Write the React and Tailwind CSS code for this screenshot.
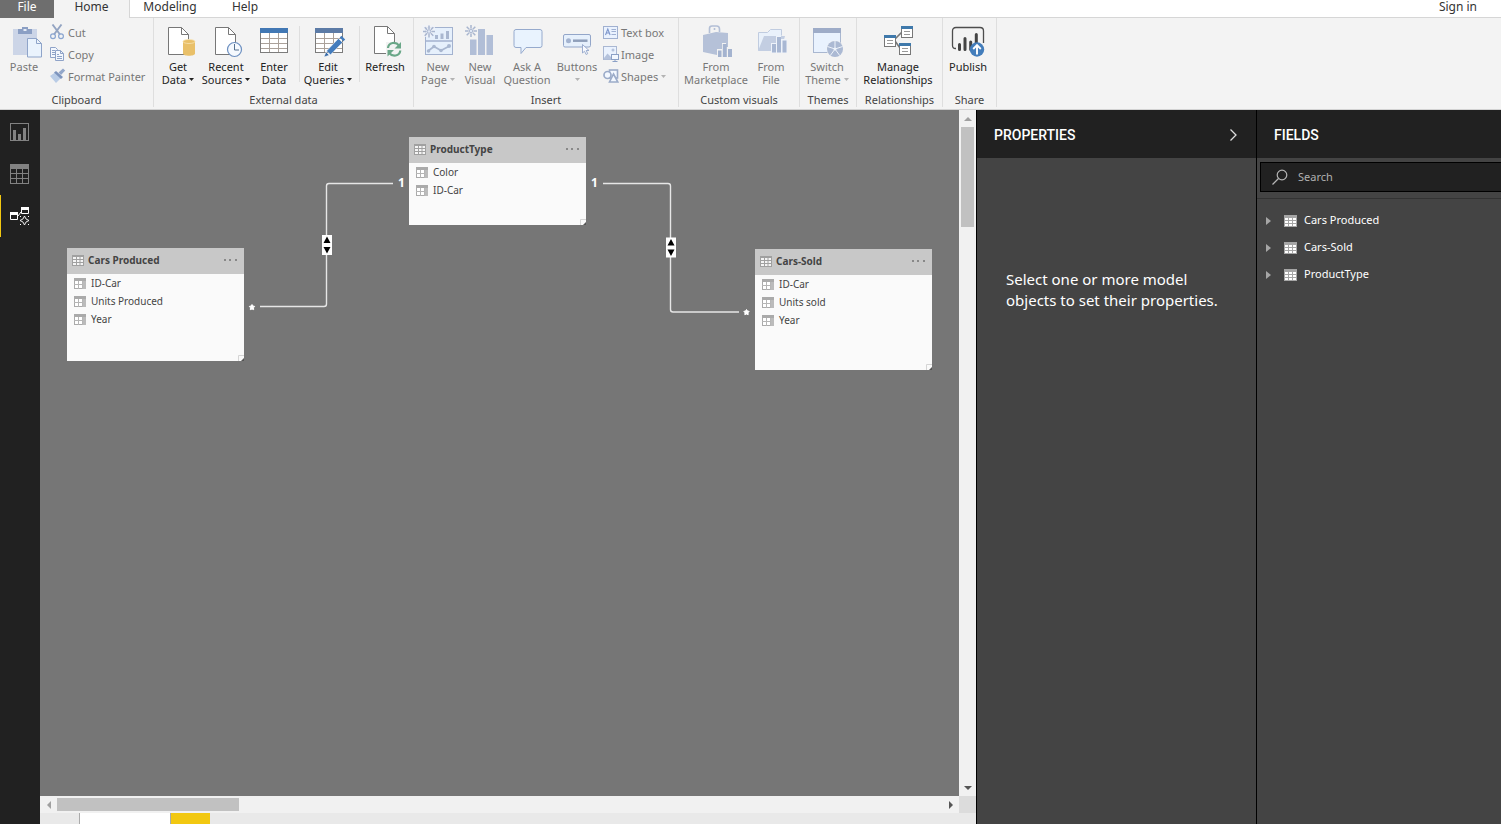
import React from "react";

/* ---------- shared icon pieces ---------- */

function BigIcon({ children }) {
  return (
    <svg className="h-8 w-9 shrink-0 overflow-visible" viewBox="0 0 36 32" fill="none" aria-hidden="true">
      {children}
    </svg>
  );
}

function SmallIcon({ children }) {
  return (
    <svg className="size-4 shrink-0" viewBox="0 0 16 16" fill="none" aria-hidden="true">
      {children}
    </svg>
  );
}

function Burst({ x, y }) {
  return (
    <g transform={`translate(${x} ${y})`} stroke="#a9b6cf" strokeWidth="1.5">
      <path d="M0-6V-2.500M0 2.500V6M-6 0h3.500M2.500 0H6M-4.300-4.300l2.500 2.500M1.800 1.800l2.500 2.500M4.300-4.300L1.800-1.800M-1.800 1.800l-2.500 2.500" />
      <circle r="1.800" fill="#dfe7f5" strokeWidth="1" />
    </g>
  );
}

function Page({ x = 8, y = 1 }) {
  return (
    <g transform={`translate(${x} ${y})`} stroke="#777" strokeWidth="1">
      <path d="M.5.5h13l7 7v20H.5z" fill="#fff" />
      <path d="M13.500.5v7h7" />
    </g>
  );
}

function Grid({ x, y, header }) {
  return (
    <g transform={`translate(${x} ${y})`}>
      <rect x=".5" y=".5" width="27" height="24" fill="#fff" stroke="#7c7c7c" />
      <path d="M9.500 5v19M18.500 5v19M1 10.500h26M1 15.500h26M1 20.500h26" stroke="#aaa19a" />
      <rect width="28" height="5" fill={header} />
    </g>
  );
}

const PasteIcon = () => (
  <BigIcon>
    <path d="M7 3h24v26H7z" fill="#ccd5e7" />
    <path d="M12 8V3h4V1h6v2h4v5z" fill="#8b9fc4" />
    <path d="M17.500 3h3v2h-3z" fill="#e6ecf6" />
    <path d="M21.500 12.500h9l5 5v13.500h-14z" fill="#eaf3fd" stroke="#8fa4c9" />
    <path d="M30.500 12.500v5h5" stroke="#8fa4c9" />
  </BigIcon>
);

const GetDataIcon = () => (
  <BigIcon>
    <Page />
    <path d="M23 15.500v12c0 3 12 3 12 0v-12z" fill="#e9c069" />
    <ellipse cx="29" cy="15.500" rx="6" ry="2" fill="#e9c069" stroke="#f7e3b4" strokeWidth=".8" />
  </BigIcon>
);

const RecentIcon = () => (
  <BigIcon>
    <Page x={7} />
    <circle cx="26.500" cy="23.500" r="7" fill="#f5f9fe" stroke="#6c8fc0" strokeWidth="1.200" />
    <path d="M26.500 18v6h4.500" stroke="#54708f" />
  </BigIcon>
);

const EnterDataIcon = () => (
  <BigIcon>
    <Grid x={4} y={2} header="#4278b4" />
  </BigIcon>
);

const EditQueriesIcon = () => (
  <BigIcon>
    <Grid x={5} y={2} header="#5c7ba6" />
    <path d="M14 31l2-5 3.200 3.200z" fill="#3568a6" stroke="#fff" strokeWidth=".5" />
    <path d="M16.500 25L28.500 12.500l4 4L20.500 28.700z" fill="#437cbd" stroke="#fff" strokeWidth=".5" />
    <path d="M29.700 11.600l1.800-1.800 3.700 3.700-1.800 1.800z" fill="#437cbd" />
  </BigIcon>
);

const RefreshIcon = () => (
  <BigIcon>
    <Page x={7} y={0} />
    <rect x="19" y="16" width="16" height="15" fill="#f3f3f3" />
    <path d="M21 22c.5-6 8-6.500 11-2.500M33.300 24.500c-.6 6-8 6.500-11 2.500" stroke="#6aa788" strokeWidth="2.200" />
    <path d="M34 16v6.500h-6.500zM20.500 30.500V24H27z" fill="#6aa788" />
  </BigIcon>
);

const NewPageIcon = () => (
  <BigIcon>
    <rect x="5.500" y="1.500" width="27" height="27" fill="#e6f0fc" stroke="#a3b2cf" />
    <path d="M5.500 15h27" stroke="#a3b2cf" strokeWidth="1.500" />
    <path d="M15 9h3v4h-3zM20.500 7.500h3V13h-3zM26 5h3v8h-3z" fill="#a9b7d0" />
    <path d="M8 25l6-4.500 7 4L29.500 20" stroke="#a9b7d0" strokeWidth="1.800" />
    <g fill="#a9b7d0">
      <circle cx="8.500" cy="25" r="1.800" />
      <circle cx="14" cy="20.500" r="1.800" />
      <circle cx="21" cy="24.500" r="1.800" />
      <circle cx="29" cy="20" r="2" />
    </g>
    <path d="M2-1h13v6l-4 6H2z" fill="#f0f3f8" opacity=".8" />
    <Burst x={9} y={5.500} />
  </BigIcon>
);

const NewVisualIcon = () => (
  <BigIcon>
    <path d="M8 13.500h6.500V29H8zM16 3h7v26h-7zM24.500 9H31v20h-6.500z" fill="#b1bed7" />
    <Burst x={9} y={5} />
  </BigIcon>
);

const AskIcon = () => (
  <BigIcon>
    <path d="M7 3.500h24q2 0 2 2v14q0 2-2 2H17l-5 6v-6H7q-2 0-2-2v-14q0-2 2-2z" fill="#e9f3fe" stroke="#96aacd" />
  </BigIcon>
);

const ButtonsIcon = () => (
  <BigIcon>
    <rect x="4.500" y="8.500" width="27" height="12.500" rx="1.500" fill="#e6f0fc" stroke="#93a6c9" />
    <circle cx="9.500" cy="14.700" r="2.500" fill="#a3b3d0" />
    <path d="M14 14.700h14.500" stroke="#8f9fba" strokeWidth="2.500" />
    <path d="M23.500 18.500v8.500l2-1.800 1.600 3.300 1.600-.8-1.500-3.200h2.800z" fill="#f8faff" stroke="#93a6c9" strokeWidth=".9" />
  </BigIcon>
);

const MarketplaceIcon = () => (
  <BigIcon>
    <path d="M11.500 7V2.500Q11.500 0 14 0h4.500q3 0 3 3v3M16.500 4V2" stroke="#b3bfd6" strokeWidth="1.600" />
    <path d="M5 9l13-3 12 1v14h-2v-4h-4v6h-5v6l-14-3z" fill="#b5c1d8" />
    <path d="M20 24.500h3.500V31H20zM24.800 18h4v13h-4zM30 23h4v8h-4z" fill="#a4b3cf" />
  </BigIcon>
);

const FromFileIcon = () => (
  <BigIcon>
    <path d="M5.500 24.500v-18h9l3-3h11v6" fill="#e9f1fb" stroke="#c0cce0" />
    <path d="M5 25l6-15h21l-4 15z" fill="#c3cee2" />
    <path d="M18 17h5v-7h5v3h6v14H18z" fill="#eef3fa" />
    <path d="M19 18h4v8.500h-4zM24 11h4v15.500h-4zM29.500 14.500h4v12h-4z" fill="#a9b8d3" />
  </BigIcon>
);

const ThemeIcon = () => (
  <BigIcon>
    <rect x="4.500" y="2.500" width="27" height="24" fill="#e9f2fe" stroke="#a9b7d0" />
    <path d="M4 2h28v5H4z" fill="#9eacc8" />
    <circle cx="26" cy="23" r="8.500" fill="#f3f3f3" />
    <circle cx="26" cy="23" r="8" fill="#abb9d3" />
    <path d="M26 23v-8M26 23l7.600-2.500M26 23l4.700 6.500M26 23l-4.700 6.500M26 23l-7.600-2.500" stroke="#eef3fa" />
    <circle cx="26" cy="23" r="1.500" fill="#eef3fa" />
  </BigIcon>
);

function MiniBox({ x, y }) {
  return (
    <g transform={`translate(${x} ${y})`}>
      <rect x=".5" y=".5" width="11" height="11" fill="#fff" stroke="#777" />
      <path d="M0 0h12v3H0z" fill="#3f79ab" />
      <path d="M3 5.500h6M3 8.500h6" stroke="#999" />
    </g>
  );
}

const RelationsIcon = () => (
  <BigIcon>
    <path d="M15 13l7-7M15 15l5 7" stroke="#777" strokeWidth="1.600" />
    <MiniBox x={4} y={9} />
    <MiniBox x={21} y={0} />
    <MiniBox x={19} y={17} />
  </BigIcon>
);

const PublishIcon = () => (
  <BigIcon>
    <path d="M6 22.500H5.500q-3 0-3-3V5q0-3.500 3.500-3.500h24q3.500 0 3.500 3.500v12" stroke="#4d4d4d" strokeWidth="1.300" />
    <path d="M9.500 18.500v5M15 12.500v11M20.700 16v7.500M26.300 8.500V18" stroke="#444" strokeWidth="3" strokeLinecap="round" />
    <circle cx="27" cy="23.500" r="7.200" fill="#437dbb" />
    <path d="M27 28.500v-9M23.200 23l3.800-3.800 3.800 3.800" stroke="#fff" strokeWidth="1.900" />
  </BigIcon>
);

const CutIcon = () => (
  <SmallIcon>
    <path d="M2.500.5l7.500 10M11.500.5L4 10.500" stroke="#93a4c2" strokeWidth="1.900" />
    <circle cx="3" cy="12.200" r="2.400" stroke="#8aa5d0" strokeWidth="1.200" />
    <circle cx="11" cy="12.200" r="2.400" stroke="#8aa5d0" strokeWidth="1.200" />
  </SmallIcon>
);

const CopyIcon = () => (
  <SmallIcon>
    <path d="M.5 1.500h5l2 2v8h-7z" fill="#f3f7fd" stroke="#8fa3c8" />
    <path d="M2 4.500h3M2 6.500h3M2 8.500h3" stroke="#8fa3c8" />
    <path d="M5.500 4.500h5l3 3v7h-8z" fill="#f3f7fd" stroke="#8fa3c8" />
    <path d="M10.500 4.500v3h3M7 8.500h2M7 10.500h5M7 12.500h5" stroke="#8fa3c8" />
  </SmallIcon>
);

const PainterIcon = () => (
  <SmallIcon>
    <path d="M0 8l5-3.500 6 5.500-5 5z" fill="#b9cce6" />
    <path d="M4 4.500l2-1.500 7 6-2 2z" fill="#7d94bd" />
    <path d="M8.500 4.500L13 .5 15.200 2.500 11 7z" fill="#93a7ca" />
  </SmallIcon>
);

const TextBoxIcon = () => (
  <SmallIcon>
    <rect x=".5" y="2.500" width="14" height="12" fill="#eaf2fe" stroke="#a0b0d0" />
    <path d="M2.500 11L4.800 5l2.300 6M3.300 9h3" stroke="#7d96cc" strokeWidth="1.100" />
    <path d="M8.500 5.500H13M8.500 7.500H13M8.500 10.500H13" stroke="#9fb0d2" />
  </SmallIcon>
);

const ImageIcon = () => (
  <SmallIcon>
    <rect x=".5" y=".5" width="13" height="13" fill="#eaf2fe" stroke="#a9b7d2" />
    <path d="M1 12l3.500-4.500L8 11v2.500H1z" fill="#b4c2dc" />
    <circle cx="10" cy="4" r="1.500" fill="#b4c2dc" />
    <rect x="8.500" y="8.500" width="7" height="5" fill="#f3f8ff" stroke="#8ba0c6" />
    <path d="M12 13.500v2M9.500 15.500h5" stroke="#8ba0c6" />
  </SmallIcon>
);

const ShapesIcon = () => (
  <SmallIcon>
    <rect x="6.500" y="2" width="8" height="8" fill="#f3f8ff" stroke="#9cacc9" strokeWidth="1.600" />
    <circle cx="4.500" cy="7" r="3.500" fill="#f3f8ff" stroke="#9cacc9" strokeWidth="1.700" />
    <path d="M10.500 6l4.300 8H6.500z" fill="#f3f8ff" stroke="#9cacc9" strokeWidth="1.600" />
  </SmallIcon>
);

/* ---------- ribbon ---------- */

function Caret({ muted, alone }) {
  return (
    <svg
      className={`inline-block h-[3px] w-[5px] align-[3px] ${muted ? "text-[#b3b3b3]" : "text-[#222]"} ${alone ? "" : "ml-[3px]"}`}
      viewBox="0 0 5 3"
      aria-hidden="true"
    >
      <path d="M0 0h5L2.500 3z" fill="currentColor" />
    </svg>
  );
}

function BigButton({ icon, lines, width, disabled, caret }) {
  return (
    <button
      type="button"
      className={`flex shrink-0 flex-col items-center gap-[2px] pt-2 whitespace-nowrap ${width} ${disabled ? "text-[#777]" : "text-[#222]"}`}
    >
      {icon}
      <span className="flex flex-col items-center">
        {lines.map((line, i) => (
          <span key={line} className="block">
            {line}
            {caret && i === lines.length - 1 && <Caret muted={disabled} alone={line === ""} />}
          </span>
        ))}
      </span>
    </button>
  );
}

function SmallButton({ icon, label, caret }) {
  return (
    <button type="button" className="flex h-[22px] items-center gap-[2px] whitespace-nowrap text-[#777]">
      {icon}
      <span>{label}{caret && <Caret muted />}</span>
    </button>
  );
}

function Group({ label, width, children }) {
  return (
    <section aria-label={label} className={`flex shrink-0 flex-col ${width}`}>
      <div className="flex grow border-r border-[#dedede]">
        <div className="flex grow flex-col">
          <div className="flex h-[75px]">{children}</div>
          <h2 className="text-center text-[#444]">{label}</h2>
        </div>
      </div>
    </section>
  );
}

const Divider = () => <div className="mt-2 h-14 w-px shrink-0 bg-[#dedede]" />;

function Ribbon() {
  return (
    <div className="flex h-[92px] overflow-hidden border-b border-[#d2d2d2] bg-[#f3f3f3] pb-[2px] text-[11px] leading-[13px]">
      <Group label="Clipboard" width="w-[154px]">
        <BigButton icon={<PasteIcon />} lines={["Paste"]} width="w-12" disabled />
        <div className="flex flex-col pt-[3px] pl-[2px]">
          <SmallButton icon={<CutIcon />} label="Cut" />
          <SmallButton icon={<CopyIcon />} label="Copy" />
          <SmallButton icon={<PainterIcon />} label="Format Painter" />
        </div>
      </Group>
      <Group label="External data" width="w-[260px]">
        <div className="flex gap-[3px] pl-[2px]">
          <div className="flex">
            <BigButton icon={<GetDataIcon />} lines={["Get", "Data"]} width="w-11" caret />
            <BigButton icon={<RecentIcon />} lines={["Recent", "Sources"]} width="w-[52px]" caret />
            <BigButton icon={<EnterDataIcon />} lines={["Enter", "Data"]} width="w-11" />
          </div>
          <div className="flex">
            <Divider />
            <BigButton icon={<EditQueriesIcon />} lines={["Edit", "Queries"]} width="w-[56px]" caret />
          </div>
          <div className="flex">
            <Divider />
            <BigButton icon={<RefreshIcon />} lines={["Refresh"]} width="w-[50px]" />
          </div>
        </div>
      </Group>
      <Group label="Insert" width="w-[265px]">
        <div className="flex pl-[3px]">
          <BigButton icon={<NewPageIcon />} lines={["New", "Page"]} width="w-[42px]" disabled caret />
          <BigButton icon={<NewVisualIcon />} lines={["New", "Visual"]} width="w-[42px]" disabled />
          <BigButton icon={<AskIcon />} lines={["Ask A", "Question"]} width="w-[52px]" disabled />
          <BigButton icon={<ButtonsIcon />} lines={["Buttons", ""]} width="w-12" disabled caret />
          <div className="flex flex-col pt-[3px] pl-[2px]">
            <SmallButton icon={<TextBoxIcon />} label="Text box" />
            <SmallButton icon={<ImageIcon />} label="Image" />
            <SmallButton icon={<ShapesIcon />} label="Shapes" caret />
          </div>
        </div>
      </Group>
      <Group label="Custom visuals" width="w-[121px]">
        <div className="flex pl-[3px]">
          <BigButton icon={<MarketplaceIcon />} lines={["From", "Marketplace"]} width="w-[68px]" disabled />
          <BigButton icon={<FromFileIcon />} lines={["From", "File"]} width="w-[42px]" disabled />
        </div>
      </Group>
      <Group label="Themes" width="w-[57px]">
        <BigButton icon={<ThemeIcon />} lines={["Switch", "Theme"]} width="w-[54px]" disabled caret />
      </Group>
      <Group label="Relationships" width="w-[86px]">
        <BigButton icon={<RelationsIcon />} lines={["Manage", "Relationships"]} width="w-[82px]" />
      </Group>
      <Group label="Share" width="w-[54px]">
        <BigButton icon={<PublishIcon />} lines={["Publish"]} width="w-[50px]" />
      </Group>
    </div>
  );
}

function MenuBar() {
  return (
    <header className="flex h-[18px] bg-white text-[12px] leading-[13px] text-[#333]">
      <nav className="flex" aria-label="Ribbon tabs">
        <button type="button" className="flex w-[54px] items-start justify-center bg-[#6e6e6e] text-white">File</button>
        <button type="button" aria-current="page" className="flex w-[76px] items-start justify-center border-r border-[#d6d6d6] bg-[#f3f3f3]">Home</button>
        <button type="button" className="flex w-20 items-start justify-center border-b border-[#d6d6d6]">Modeling</button>
        <button type="button" className="flex w-[70px] items-start justify-center border-b border-[#d6d6d6]">Help</button>
      </nav>
      <div className="flex grow items-start justify-end border-b border-[#d6d6d6] pr-6">
        <button type="button">Sign in</button>
      </div>
    </header>
  );
}

/* ---------- left rail ---------- */

function Rail() {
  return (
    <nav aria-label="Views" className="flex w-10 shrink-0 flex-col bg-[#212121] pt-px">
      <button type="button" aria-label="Report" className="flex h-[42px] items-center pl-[10px]">
        <svg className="h-[18px] w-[19px]" viewBox="0 0 19 18" fill="none">
          <rect x=".5" y=".5" width="18" height="17" stroke="#828282" />
          <path d="M3 7h3v10H3zM8 11h3v6H8zM13 5h3v12h-3z" fill="#828282" />
        </svg>
      </button>
      <button type="button" aria-label="Data" className="flex h-[42px] items-center pl-[10px]">
        <svg className="h-5 w-[19px]" viewBox="0 0 19 20" fill="none">
          <rect x=".5" y=".5" width="18" height="19" stroke="#828282" />
          <path d="M0 0h19v5H0z" fill="#828282" />
          <path d="M6.500 5v15M12.500 5v15M0 9.500h19M0 14.500h19" stroke="#828282" />
        </svg>
      </button>
      <button type="button" aria-label="Model" aria-current="page" className="flex h-[42px] items-center border-l border-[#f2c811] pl-[9px]">
        <svg className="h-[18px] w-5" viewBox="0 0 20 18" fill="none">
          <path d="M.5 5.500h7v7h-7zM11.500.5h7v6h-7z" stroke="#fff" />
          <path d="M0 5h8v3H0zM11 0h8v3h-8z" fill="#fff" />
          <path d="M8 9l3-4" stroke="#fff" />
          <path d="M14.500 9q.8 3.700 4.500 4.500-3.700.8-4.500 4.500-.8-3.700-4.500-4.500 3.700-.8 4.500-4.500z" fill="#212121" stroke="#fff" strokeWidth=".9" />
          <path d="M10 9h1v1h-1zM18 9h1v1h-1zM10 17h1v1h-1zM18 17h1v1h-1z" fill="#fff" />
        </svg>
      </button>
    </nav>
  );
}

/* ---------- model canvas ---------- */

const NODES = [
  { name: "Cars Produced", columns: ["ID-Car", "Units Produced", "Year"], place: "left-[27px] top-[138px] h-[113px]" },
  { name: "ProductType", columns: ["Color", "ID-Car"], place: "left-[369px] top-[27px] h-[88px]" },
  { name: "Cars-Sold", columns: ["ID-Car", "Units sold", "Year"], place: "left-[715px] top-[139px] h-[121px]" },
];

function TableNode({ name, columns, place }) {
  return (
    <article className={`absolute flex w-[177px] flex-col bg-[#fafafa] text-[10px] text-[#444] ${place}`}>
      <header className="flex h-[26px] shrink-0 items-center gap-1 bg-[#c8c8c8] pb-[2px] pl-[5px]">
        <svg className="h-[11px] w-3" viewBox="0 0 12 11" fill="none" aria-hidden="true">
          <rect x=".5" y=".5" width="11" height="10" fill="#f4f4f4" stroke="#a0a0a0" />
          <path d="M1 1.500h10M4.500 2v9M8 2v9M1 4.500h10M1 7.500h10" stroke="#a0a0a0" />
        </svg>
        <h3 className="grow font-bold">{name}</h3>
        <button type="button" aria-label={`${name} options`} className="pr-[7px]">
          <svg className="h-[2px] w-[13px]" viewBox="0 0 13 2">
            <path d="M0 0h2v2H0zM5 0h2v2H5zM11 0h2v2h-2z" fill="#888" />
          </svg>
        </button>
      </header>
      <ul className="grow">
        {columns.map((c) => (
          <li key={c} className="flex h-[18px] items-center gap-[5px] pl-[7px]">
            <svg className="h-[11px] w-3" viewBox="0 0 12 11" fill="none" aria-hidden="true">
              <rect x=".5" y=".5" width="11" height="10" fill="#fff" stroke="#aaa" />
              <path d="M0 0h12v3H0z" fill="#aaa" />
              <path d="M8 3h4v8H8z" fill="#bbb" />
              <path d="M4.500 3v8M8.500 3v8M0 6.500h8" stroke="#b5b5b5" />
            </svg>
            {c}
          </li>
        ))}
      </ul>
      <svg className="h-[6px] w-[6px] self-end" viewBox="0 0 6 6" fill="none" aria-hidden="true">
        <path d="M.5 6V.5H6" stroke="#d5d5d5" />
        <path d="M3 6l3-3v3z" fill="#555" />
      </svg>
    </article>
  );
}

function Links() {
  return (
    <svg className="absolute inset-0 h-full w-full" fill="none" role="img" aria-label="Relationships between tables">
      <path d="M353 73.500h-64q-2.500 0-2.500 2.500v118q0 2.500-2.500 2.500h-64" stroke="#e6e6e6" strokeWidth="1.400" />
      <path d="M563 73.500h65q2.500 0 2.500 2.500v123.500q0 2.500 2.500 2.500h66" stroke="#e6e6e6" strokeWidth="1.400" />
      <g fill="#fff">
        <path d="M212 194.500l.9 1.500 1.800.4-1.200 1.400.2 1.900-1.700-.7-1.700.7.2-1.900-1.200-1.400 1.800-.4z" stroke="#fff" />
        <path d="M706.500 199.500l.9 1.500 1.800.4-1.200 1.400.2 1.900-1.700-.7-1.700.7.2-1.900-1.200-1.400 1.800-.4z" stroke="#fff" />
      </g>
      <path d="M282 125h10v20h-10zM626 127.500h10v20h-10z" fill="#fff" />
      <path d="M283.500 133l3.500-6.500 3.500 6.500zM283.500 137l3.500 6.500 3.500-6.500zM627.500 135.500l3.500-6.500 3.500 6.500zM627.500 139.500l3.500 6.500 3.500-6.500z" fill="#000" />
      <g fill="#fff" className="text-[12px] font-bold">
        <text x="358" y="77">1</text>
        <text x="551" y="77">1</text>
      </g>
    </svg>
  );
}

function Arrow({ dir, label, color = "#555" }) {
  const d = { up: "M0 6l4-4 4 4z", down: "M0 2l4 4 4-4z", left: "M6 0L2 4l4 4z", right: "M2 0l4 4-4 4z" }[dir];
  return (
    <button type="button" aria-label={label} className="flex size-[17px] shrink-0 items-center justify-center">
      <svg className="size-2" viewBox="0 0 8 8" aria-hidden="true">
        <path d={d} fill={color} />
      </svg>
    </button>
  );
}

function Workspace() {
  return (
    <main className="flex min-w-0 grow flex-col">
      <div className="flex grow">
        <div className="relative min-w-0 grow overflow-hidden bg-[#767676]">
          <Links />
          {NODES.map((n) => (
            <TableNode key={n.name} {...n} />
          ))}
        </div>
        <div className="flex w-[17px] shrink-0 flex-col bg-[#f1f1f1]">
          <Arrow dir="up" label="Scroll up" color="#a0a0a0" />
          <div className="mx-[2px] h-[100px] bg-[#c1c1c1]" />
          <div className="grow" />
          <Arrow dir="down" label="Scroll down" />
        </div>
      </div>
      <div className="flex h-[17px] shrink-0 bg-[#f1f1f1]">
        <Arrow dir="left" label="Scroll left" color="#a0a0a0" />
        <div className="my-[2px] w-[182px] bg-[#c1c1c1]" />
        <div className="grow" />
        <Arrow dir="right" label="Scroll right" />
        <div className="w-[17px] bg-[#dcdcdc]" />
      </div>
      <div className="flex h-[11px] shrink-0 bg-[#e9e9e9] pl-[39px]">
        <div className="w-[91px] border-l border-[#aaa] bg-white" />
        <div className="w-10 border-l border-[#aaa] bg-[#f2c811]" />
      </div>
    </main>
  );
}

/* ---------- right panes ---------- */

function PaneTitle({ children }) {
  return <h2 className="font-['Roboto',sans-serif] text-[14px] font-medium text-white">{children}</h2>;
}

function Properties() {
  return (
    <aside className="w-[280px] shrink-0 border-l border-black bg-[#444]">
      <header className="flex h-12 items-center justify-between bg-[#212121] pt-[2px] pr-[19px] pl-[17px]">
        <PaneTitle>PROPERTIES</PaneTitle>
        <button type="button" aria-label="Collapse properties">
          <svg className="h-3 w-2" viewBox="0 0 8 12" fill="none">
            <path d="M1.500.5L7 6l-5.500 5.500" stroke="#ddd" strokeWidth="1.300" />
          </svg>
        </button>
      </header>
      <p className="px-[29px] pt-[111px] text-[15px] leading-[21px] text-white">
        Select one or more model objects to set their properties.
      </p>
    </aside>
  );
}

function Fields() {
  return (
    <aside className="w-[245px] shrink-0 border-l border-black bg-[#444]">
      <header className="flex h-12 items-center bg-[#212121] pt-[2px] pl-[17px]">
        <PaneTitle>FIELDS</PaneTitle>
      </header>
      <div className="border-b border-[#333] pt-1 pb-[6px] pl-[3px]">
        <div className="flex h-[30px] items-center gap-[10px] border border-r-0 border-black bg-[#212121] pl-[11px]">
          <label htmlFor="field-search" aria-label="Search fields">
            <svg className="size-4" viewBox="0 0 16 16" fill="none" aria-hidden="true">
              <circle cx="10" cy="6" r="4.800" stroke="#b5b5b5" strokeWidth="1.200" />
              <path d="M6.500 9.500L.5 15.500" stroke="#b5b5b5" strokeWidth="1.200" />
            </svg>
          </label>
          <input
            id="field-search"
            type="search"
            aria-label="Search fields"
            placeholder="Search"
            className="w-full min-w-0 bg-transparent text-[11px] text-white outline-none placeholder:text-[#b0b0b0]"
          />
        </div>
      </div>
      <ul className="pt-2 text-[11px] text-white">
        {["Cars Produced", "Cars-Sold", "ProductType"].map((name) => (
          <li key={name}>
            <button type="button" className="flex h-[27px] w-full items-center pl-[9px]">
              <svg className="h-2 w-[5px]" viewBox="0 0 5 8" aria-hidden="true">
                <path d="M0 0l5 4-5 4z" fill="#a6a6a6" />
              </svg>
              <svg className="mr-[7px] ml-[13px] h-3 w-[13px]" viewBox="0 0 13 12" aria-hidden="true">
                <path d="M0 0h13v12H0z" fill="#a6a6a6" />
                <path d="M1 3h3v2H1zM5 3h3v2H5zM9 3h3v2H9zM1 6h3v2H1zM5 6h3v2H5zM9 6h3v2H9zM1 9h3v2H1zM5 9h3v2H5zM9 9h3v2H9z" fill="#fff" />
              </svg>
              {name}
            </button>
          </li>
        ))}
      </ul>
    </aside>
  );
}

export default function App() {
  return (
    <div className="flex min-h-screen flex-col font-['Noto_Sans','Open_Sans',sans-serif]">
      <MenuBar />
      <Ribbon />
      <div className="flex grow">
        <Rail />
        <Workspace />
        <Properties />
        <Fields />
      </div>
    </div>
  );
}
